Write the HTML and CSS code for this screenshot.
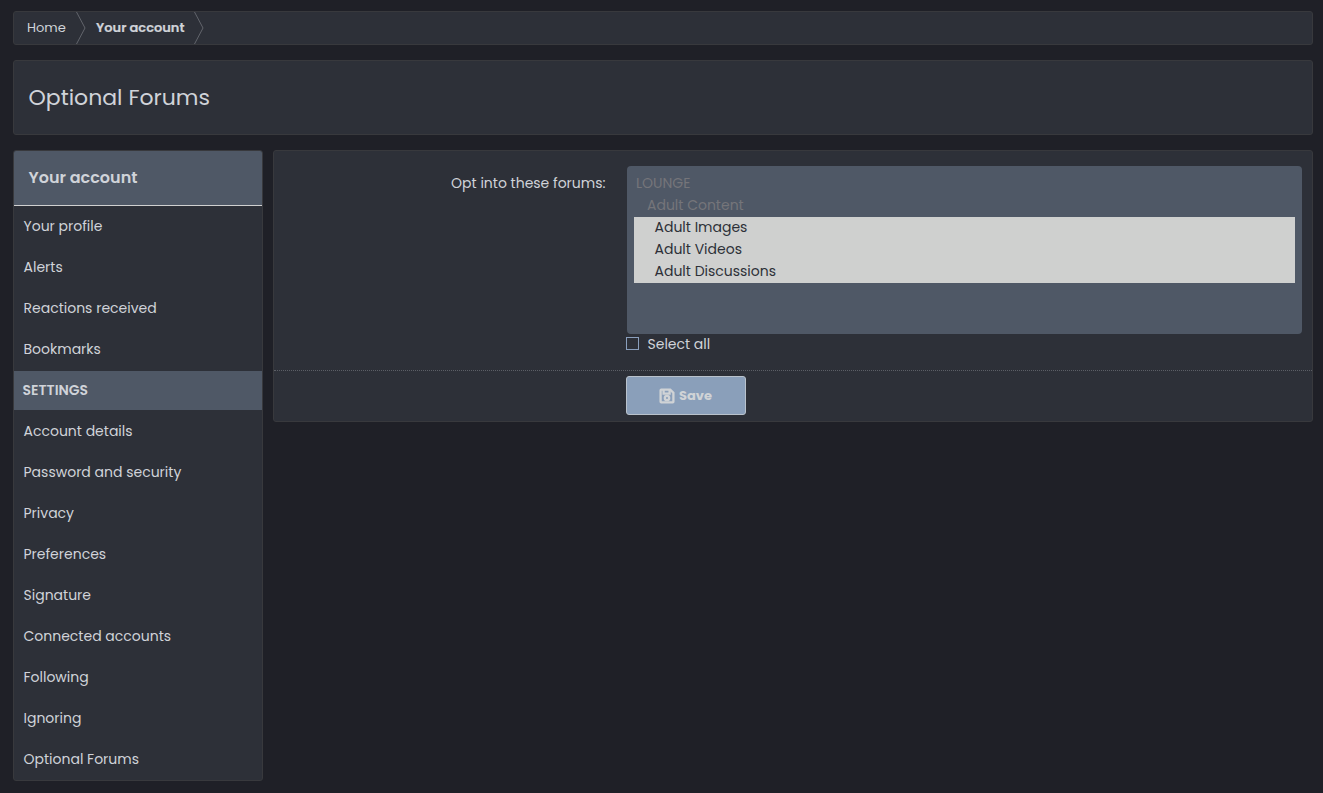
FILE: index.html
```html
<!DOCTYPE html>
<html lang="en">
<head>
    <meta charset="UTF-8">
    <meta name="viewport" content="width=device-width, initial-scale=1.0">
    <title>Optional Forums</title>
    <link rel="stylesheet" href="styles.css">
</head>
<body>
    <!-- Breadcrumbs -->
    <nav class="breadcrumbs panel">
        <a href="#" class="crumb-home">Home</a>
        <svg class="crumb-arrow" width="10" height="32" viewBox="0 0 10 32"><path d="M0.5 0L9 16L0.5 32"/></svg>
        <a href="#" class="current">Your account</a>
        <svg class="crumb-arrow" width="10" height="32" viewBox="0 0 10 32"><path d="M0.5 0L9 16L0.5 32"/></svg>
    </nav>

    <!-- Page Title -->
    <header class="page-title panel">
        <h1>Optional Forums</h1>
    </header>

    <div class="container">
        <!-- Account Sidebar -->
        <aside class="sidebar panel">
            <h2>Your account</h2>
            <a href="#">Your profile</a>
            <a href="#">Alerts</a>
            <a href="#">Reactions received</a>
            <a href="#">Bookmarks</a>
            <h3>Settings</h3>
            <a href="#">Account details</a>
            <a href="#">Password and security</a>
            <a href="#">Privacy</a>
            <a href="#">Preferences</a>
            <a href="#">Signature</a>
            <a href="#">Connected accounts</a>
            <a href="#">Following</a>
            <a href="#">Ignoring</a>
            <a href="#">Optional Forums</a>
        </aside>

        <!-- Forum Options Form -->
        <form class="options-form panel">
            <div class="form-row">
                <div class="form-label">Opt into these forums:</div>
                <div class="form-field">
                    <ul class="forum-list">
                        <li class="disabled">LOUNGE</li>
                        <li class="disabled level-1">Adult Content</li>
                        <li class="selected">Adult Images</li>
                        <li class="selected">Adult Videos</li>
                        <li class="selected">Adult Discussions</li>
                    </ul>
                    <label class="select-all"><input type="checkbox"><span>Select all</span></label>
                </div>
            </div>
            <div class="form-submit">
                <button type="button" class="save-btn">
                    <svg width="16" height="16" viewBox="0 0 16 16">
                        <path class="disk" d="M2.2 1.6H11.2L14.4 4.8V13.8Q14.4 14.4 13.8 14.4H2.2Q1.6 14.4 1.6 13.8V2.2Q1.6 1.6 2.2 1.6Z"/>
                        <path class="disk" d="M4.6 2V5.6H10.6V2"/>
                        <circle class="disk" cx="8" cy="10" r="2.2"/>
                    </svg>
                    <span>Save</span>
                </button>
            </div>
        </form>
    </div>
</body>
</html>
```
FILE: styles.css
```css
* {
    margin: 0;
    padding: 0;
    box-sizing: border-box;
}

body {
    font-family: Poppins, Inter, sans-serif;
    font-feature-settings: "cv11";
    font-size: 14px;
    line-height: 22px;
    color: #d0d3d9;
    background-color: #1f2027;
    padding: 11px 10px 0 13px;
}

a {
    color: inherit;
    text-decoration: none;
}

.panel {
    background-color: #2d3038;
    border: 1px solid #38393d;
    border-radius: 3px;
}

/* Breadcrumbs */
.breadcrumbs {
    display: flex;
    align-items: center;
    height: 34px;
    padding-left: 13px;
    font-size: 13px;
}

.crumb-home {
    width: 49px;
}

.breadcrumbs .current {
    width: 89px;
    margin: 0 9px 0 10px;
    font-weight: 600;
    -webkit-text-stroke: 0.2px;
    white-space: nowrap;
}

.crumb-arrow {
    fill: none;
    stroke: #62656c;
}

/* Page Title */
.page-title {
    height: 75px;
    margin-top: 15px;
    padding: 20px 14.5px;
}

.page-title h1 {
    font-size: 22px;
    font-weight: 400;
    line-height: 33px;
}

/* Main Container */
.container {
    display: flex;
    align-items: flex-start;
    gap: 10px;
    margin-top: 15px;
}

/* Account Sidebar */
.sidebar {
    width: 250px;
    height: 631px;
    overflow: hidden;
}

.sidebar h2 {
    height: 55px;
    padding: 16px 14.5px;
    font-size: 16px;
    font-weight: 600;
    background-color: #4f5866;
    border-bottom: 1px solid #d0d0d0;
}

.sidebar a {
    display: block;
    height: 41px;
    padding: 9px 9.5px;
}

.sidebar h3 {
    height: 39px;
    margin: 1px 0;
    padding: 8px 8.5px;
    font-size: 14px;
    font-weight: 600;
    text-transform: uppercase;
    background-color: #4f5866;
}

/* Forum Options Form */
.options-form {
    flex: 1;
    height: 272px;
}

.form-row {
    display: flex;
    height: 220px;
    padding: 15px 10px 0 0;
    border-bottom: 1px dotted #5c5f66;
}

.form-label {
    width: 353px;
    padding: 6px 21.5px 0 0;
    text-align: right;
}

.form-field {
    flex: 1;
}

.forum-list {
    height: 168px;
    padding: 7px;
    list-style: none;
    background-color: #4f5866;
    border-radius: 4px;
}

.forum-list li {
    height: 22px;
    padding-left: 2px;
    line-height: 21px;
}

.forum-list .disabled {
    color: #75757a;
}

.forum-list .level-1 {
    padding-left: 13px;
}

.forum-list .selected {
    padding-left: 20.5px;
    color: #2d3038;
    background-color: #cfd0cf;
}

.select-all {
    display: flex;
    align-items: center;
    gap: 8.5px;
    height: 20px;
    margin-left: -1px;
}

.select-all input {
    appearance: none;
    width: 13px;
    height: 13px;
    margin-bottom: 1px;
    border: 1px solid #8a9fbd;
}

.form-submit {
    padding: 5px 0 0 352px;
}

.save-btn {
    display: flex;
    align-items: center;
    justify-content: center;
    gap: 4px;
    width: 120px;
    height: 39px;
    padding-right: 1px;
    font: inherit;
    font-size: 13px;
    font-weight: 700;
    color: #d0d3d6;
    background-color: #8a9fba;
    border: 1px solid #b9c2cc;
    border-radius: 3px;
}

.disk {
    fill: none;
    stroke: #d0d3d6;
    stroke-width: 2.3;
}
```
